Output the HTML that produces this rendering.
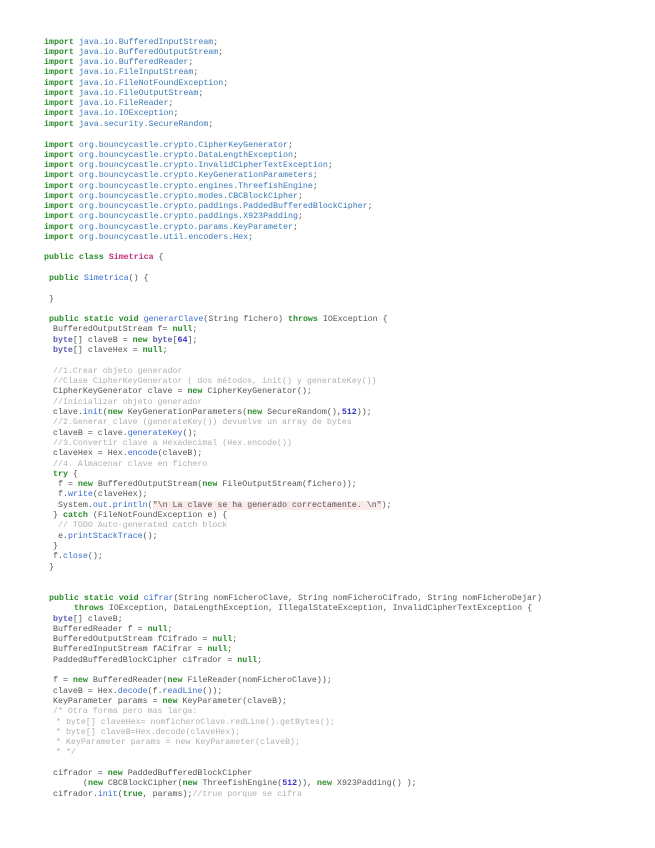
<!DOCTYPE html>
<html><head><meta charset="utf-8"><style>
body{margin:0;background:#fff;width:655px;height:848px;position:relative;overflow:hidden}
.l{position:absolute;font-family:"Liberation Mono",monospace;font-size:8.3px;line-height:10px;white-space:pre;color:#555;}
.k{color:#2a8c2a;font-weight:bold}
.p{color:#3a7ab8}
.m{color:#3b6ccf}
.c{color:#b0b0b0}
.n{color:#3434c4;font-weight:bold}
.t{color:#5a5ab4;font-weight:bold}
.s{background:#fbeaea}
.cl{color:#c0307a;font-weight:bold}
</style></head><body>
<div class="l" style="left:44px;top:38px"><span class="k">import</span> <span class="p">java.io.BufferedInputStream</span>;</div>
<div class="l" style="left:44px;top:48px"><span class="k">import</span> <span class="p">java.io.BufferedOutputStream</span>;</div>
<div class="l" style="left:44px;top:58px"><span class="k">import</span> <span class="p">java.io.BufferedReader</span>;</div>
<div class="l" style="left:44px;top:68px"><span class="k">import</span> <span class="p">java.io.FileInputStream</span>;</div>
<div class="l" style="left:44px;top:79px"><span class="k">import</span> <span class="p">java.io.FileNotFoundException</span>;</div>
<div class="l" style="left:44px;top:89px"><span class="k">import</span> <span class="p">java.io.FileOutputStream</span>;</div>
<div class="l" style="left:44px;top:99px"><span class="k">import</span> <span class="p">java.io.FileReader</span>;</div>
<div class="l" style="left:44px;top:109px"><span class="k">import</span> <span class="p">java.io.IOException</span>;</div>
<div class="l" style="left:44px;top:120px"><span class="k">import</span> <span class="p">java.security.SecureRandom</span>;</div>
<div class="l" style="left:44px;top:141px"><span class="k">import</span> <span class="p">org.bouncycastle.crypto.CipherKeyGenerator</span>;</div>
<div class="l" style="left:44px;top:151px"><span class="k">import</span> <span class="p">org.bouncycastle.crypto.DataLengthException</span>;</div>
<div class="l" style="left:44px;top:161px"><span class="k">import</span> <span class="p">org.bouncycastle.crypto.InvalidCipherTextException</span>;</div>
<div class="l" style="left:44px;top:171px"><span class="k">import</span> <span class="p">org.bouncycastle.crypto.KeyGenerationParameters</span>;</div>
<div class="l" style="left:44px;top:182px"><span class="k">import</span> <span class="p">org.bouncycastle.crypto.engines.ThreefishEngine</span>;</div>
<div class="l" style="left:44px;top:192px"><span class="k">import</span> <span class="p">org.bouncycastle.crypto.modes.CBCBlockCipher</span>;</div>
<div class="l" style="left:44px;top:202px"><span class="k">import</span> <span class="p">org.bouncycastle.crypto.paddings.PaddedBufferedBlockCipher</span>;</div>
<div class="l" style="left:44px;top:212px"><span class="k">import</span> <span class="p">org.bouncycastle.crypto.paddings.X923Padding</span>;</div>
<div class="l" style="left:44px;top:223px"><span class="k">import</span> <span class="p">org.bouncycastle.crypto.params.KeyParameter</span>;</div>
<div class="l" style="left:44px;top:233px"><span class="k">import</span> <span class="p">org.bouncycastle.util.encoders.Hex</span>;</div>
<div class="l" style="left:44px;top:253px"><span class="k">public class</span> <span class="cl">Simetrica</span> {</div>
<div class="l" style="left:49px;top:274px"><span class="k">public</span> <span class="m">Simetrica</span>() {</div>
<div class="l" style="left:49px;top:295px">}</div>
<div class="l" style="left:49px;top:315px"><span class="k">public static void</span> <span class="m">generarClave</span>(String fichero) <span class="k">throws</span> IOException {</div>
<div class="l" style="left:53px;top:325px">BufferedOutputStream f= <span class="k">null</span>;</div>
<div class="l" style="left:53px;top:336px"><span class="t">byte</span>[] claveB = <span class="k">new</span> <span class="t">byte</span>[<span class="n">64</span>];</div>
<div class="l" style="left:53px;top:346px"><span class="t">byte</span>[] claveHex = <span class="k">null</span>;</div>
<div class="l c" style="left:53px;top:367px">//1.Crear objeto generador</div>
<div class="l c" style="left:53px;top:377px">//Clase CipherKeyGenerator ( dos métodos, init() y generateKey())</div>
<div class="l" style="left:53px;top:387px">CipherKeyGenerator clave = <span class="k">new</span> CipherKeyGenerator();</div>
<div class="l c" style="left:53px;top:398px">//Inicializar objeto generador</div>
<div class="l" style="left:53px;top:408px">clave.<span class="m">init</span>(<span class="k">new</span> KeyGenerationParameters(<span class="k">new</span> SecureRandom(),<span class="n">512</span>));</div>
<div class="l c" style="left:53px;top:418px">//2.Generar clave (generateKey()) devuelve un array de bytes</div>
<div class="l" style="left:53px;top:429px">claveB = clave.<span class="m">generateKey</span>();</div>
<div class="l c" style="left:53px;top:439px">//3.Convertir clave a Hexadecimal (Hex.encode())</div>
<div class="l" style="left:53px;top:449px">claveHex = Hex.<span class="m">encode</span>(claveB);</div>
<div class="l c" style="left:53px;top:460px">//4. Almacenar clave en fichero</div>
<div class="l" style="left:53px;top:470px"><span class="k">try</span> {</div>
<div class="l" style="left:58px;top:480px">f = <span class="k">new</span> BufferedOutputStream(<span class="k">new</span> FileOutputStream(fichero));</div>
<div class="l" style="left:58px;top:490px">f.<span class="m">write</span>(claveHex);</div>
<div class="l" style="left:58px;top:501px">System.<span class="m">out</span>.<span class="m">println</span>(<span class="s">"\n La clave se ha generado correctamente. \n"</span>);</div>
<div class="l" style="left:53px;top:511px">} <span class="k">catch</span> (FileNotFoundException e) {</div>
<div class="l c" style="left:58px;top:521px">// TODO Auto-generated catch block</div>
<div class="l" style="left:58px;top:532px">e.<span class="m">printStackTrace</span>();</div>
<div class="l" style="left:53px;top:542px">}</div>
<div class="l" style="left:53px;top:552px">f.<span class="m">close</span>();</div>
<div class="l" style="left:49px;top:563px">}</div>
<div class="l" style="left:49px;top:594px"><span class="k">public static void</span> <span class="m">cifrar</span>(String nomFicheroClave, String nomFicheroCifrado, String nomFicheroDejar)</div>
<div class="l" style="left:74px;top:604px"><span class="k">throws</span> IOException, DataLengthException, IllegalStateException, InvalidCipherTextException {</div>
<div class="l" style="left:53px;top:615px"><span class="t">byte</span>[] claveB;</div>
<div class="l" style="left:53px;top:625px">BufferedReader f = <span class="k">null</span>;</div>
<div class="l" style="left:53px;top:635px">BufferedOutputStream fCifrado = <span class="k">null</span>;</div>
<div class="l" style="left:53px;top:645px">BufferedInputStream fACifrar = <span class="k">null</span>;</div>
<div class="l" style="left:53px;top:656px">PaddedBufferedBlockCipher cifrador = <span class="k">null</span>;</div>
<div class="l" style="left:53px;top:676px">f = <span class="k">new</span> BufferedReader(<span class="k">new</span> FileReader(nomFicheroClave));</div>
<div class="l" style="left:53px;top:687px">claveB = Hex.<span class="m">decode</span>(f.<span class="m">readLine</span>());</div>
<div class="l" style="left:53px;top:697px">KeyParameter params = <span class="k">new</span> KeyParameter(claveB);</div>
<div class="l c" style="left:53px;top:707px">/* Otra forma pero mas larga:</div>
<div class="l c" style="left:56px;top:718px">* byte[] claveHex= nomficheroClave.redLine().getBytes();</div>
<div class="l c" style="left:56px;top:728px">* byte[] claveB=Hex.decode(claveHex);</div>
<div class="l c" style="left:56px;top:738px">* KeyParameter params = new KeyParameter(claveB);</div>
<div class="l c" style="left:56px;top:748px">* */</div>
<div class="l" style="left:53px;top:769px">cifrador = <span class="k">new</span> PaddedBufferedBlockCipher</div>
<div class="l" style="left:83px;top:779px">(<span class="k">new</span> CBCBlockCipher(<span class="k">new</span> ThreefishEngine(<span class="n">512</span>)), <span class="k">new</span> X923Padding() );</div>
<div class="l" style="left:53px;top:790px">cifrador.<span class="m">init</span>(<span class="k">true</span>, params);<span class="c">//true porque se cifra</span></div>
</body></html>
